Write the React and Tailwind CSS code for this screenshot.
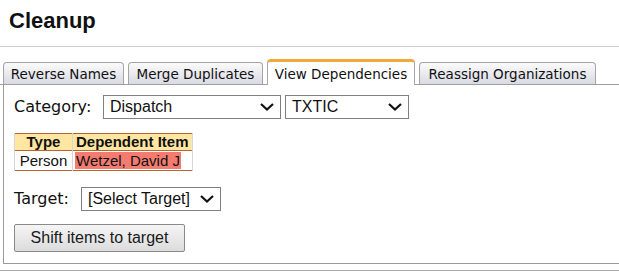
import React from "react";

const tabs = [
  { label: "Reverse Names", w: "w-[121px]" },
  { label: "Merge Duplicates", w: "w-[135px]" },
  { label: "View Dependencies", w: "w-[148px]", active: true },
  { label: "Reassign Organizations", w: "w-[177px]" },
];

function Chevron() {
  return (
    <svg width="14" height="8" viewBox="0 0 14 8" className="shrink-0">
      <path d="M1 1 L7 6.5 L13 1" fill="none" stroke="#111" strokeWidth="2.2" />
    </svg>
  );
}

function FakeSelect({ value, width }) {
  return (
    <div
      className={`${width} h-[24px] flex items-center justify-between border border-[#7f7f7f] bg-white pl-[6px] pr-[6px] font-['Liberation_Sans',Arial,sans-serif] text-[16px] text-[#111]`}
    >
      <span>{value}</span>
      <Chevron />
    </div>
  );
}

export default function App() {
  return (
    <div className="w-[619px] h-[272px] overflow-hidden bg-white">
      {/* Heading */}
      <h1 className="pt-[8px] pl-[9px] h-[46px] font-['Liberation_Sans',Arial,sans-serif] text-[22px] leading-[25px] font-bold text-[#111]">
        Cleanup
      </h1>
      <div className="h-px bg-[#cfcfcf]" />

      {/* Tabs */}
      <div className="mt-[12px] flex items-end gap-[4px] pl-[3px] border-b border-[#a0a0a0] font-['DejaVu_Sans',Verdana,sans-serif] text-[13.5px] text-[#111]">
        {tabs.map((t) =>
          t.active ? (
            <div
              key={t.label}
              className={`${t.w} h-[26px] -mb-px flex items-center justify-center pt-[2px] bg-white border-x border-[#a8a8a8] border-t-[3px] border-t-[#f2a83a] rounded-t-[4px] whitespace-nowrap`}
            >
              {t.label}
            </div>
          ) : (
            <div
              key={t.label}
              className={`${t.w} h-[22px] flex items-center justify-center pt-px bg-gradient-to-b from-[#fbfbfb] to-[#d9dae3] border border-b-0 border-[#a4a4a4] rounded-t-[4px] whitespace-nowrap`}
            >
              {t.label}
            </div>
          )
        )}
      </div>

      {/* Panel */}
      <div className="ml-[3px] h-[179px] border-l border-b border-[#9a9a9a] pl-[10px] pt-[10px]">
        <div className="flex items-center">
          <span className="font-['DejaVu_Sans',Verdana,sans-serif] text-[16px] text-[#111] w-[89px]">Category:</span>
          <FakeSelect value="Dispatch" width="w-[178px]" />
          <div className="w-[4px]" />
          <FakeSelect value="TXTIC" width="w-[124px]" />
        </div>

        <table className="mt-[14px] border-collapse font-['Liberation_Sans',Arial,sans-serif] text-[15px] text-[#111]">
          <thead>
            <tr className="bg-[#ffe6a3] border-t border-b border-[#b9642f]">
              <th className="w-[58px] h-[17px] p-0 leading-[16px] font-bold text-center border-l border-r border-[#d6d6d6]">Type</th>
              <th className="w-[120px] h-[17px] p-0 px-[3px] leading-[16px] font-bold text-left border-r border-[#d6d6d6]">Dependent Item</th>
            </tr>
          </thead>
          <tbody>
            <tr className="border-b border-[#b9642f]">
              <td className="h-[20px] p-0 text-center leading-[18px] border-l border-r border-[#d6d6d6]">Person</td>
              <td className="h-[20px] p-0 pl-[2px] leading-[18px] border-r border-[#d6d6d6]">
                <span className="bg-[#f47b70] px-px">Wetzel, David J</span>
              </td>
            </tr>
          </tbody>
        </table>

        <div className="mt-[16px] flex items-center">
          <span className="font-['DejaVu_Sans',Verdana,sans-serif] text-[16px] text-[#111] w-[67px]">Target:</span>
          <FakeSelect value="[Select Target]" width="w-[140px]" />
        </div>

        <button className="mt-[13px] w-[171px] h-[28px] border border-[#8a8a8a] rounded-[2px] bg-gradient-to-b from-[#f5f5f5] to-[#dcdcdc] font-['Liberation_Sans',Arial,sans-serif] text-[16px] text-[#1a1a1a]">
          Shift items to target
        </button>
      </div>

      <div className="mt-[6px] h-px bg-[#a8a8a8]" />
    </div>
  );
}
